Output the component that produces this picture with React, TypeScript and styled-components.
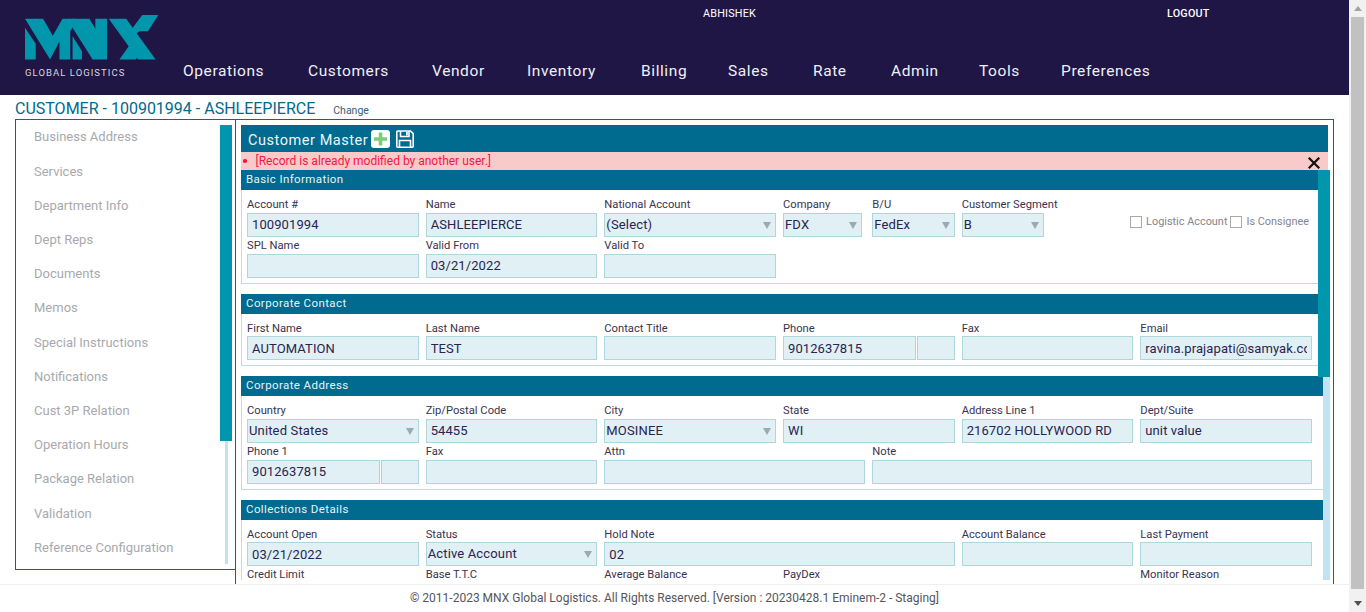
import React from "react";
import styled, { createGlobalStyle } from "styled-components";

const colors = {
  navy: "#1f1646",
  blue: "#006a8f",
  teal: "#0097ad",
  track: "#bfe3f1",
  inputBg: "#e0f0f4",
  inputBorder: "#aed7dd",
  rule: "#bfdcdf",
  text: "#2b2350",
  label: "#3a3350",
};

const GlobalStyle = createGlobalStyle`
  html, body { margin: 0; padding: 0; height: 100%; overflow: hidden; background: #fff; }
  * { box-sizing: border-box; }
  body { font-family: Roboto, "Liberation Sans", sans-serif; }
`;

const navItems = [
  { name: "Operations", width: 81 },
  { name: "Customers", width: 80 },
  { name: "Vendor", width: 51 },
  { name: "Inventory", width: 70 },
  { name: "Billing", width: 43 },
  { name: "Sales", width: 41 },
  { name: "Rate", width: 34 },
  { name: "Admin", width: 44 },
  { name: "Tools", width: 38 },
  { name: "Preferences", width: 90 },
];
const sideItems = [
  "Business Address",
  "Services",
  "Department Info",
  "Dept Reps",
  "Documents",
  "Memos",
  "Special Instructions",
  "Notifications",
  "Cust 3P Relation",
  "Operation Hours",
  "Package Relation",
  "Validation",
  "Reference Configuration",
];

const Logo = () => (
  <svg width="134" height="46" viewBox="30 22 400 137" fill={colors.teal}>
    <polygon points="30,60 62,108 62,155 30,155" />
    <polygon points="30,33 84,33 113,84 142,33 165,33 165,155 133,155 133,100 105,155" />
    <polygon points="160,33 180,33 172,60 165,70" />
    <polygon points="172,33 222,33 240,62 240,33 275,33 275,155 232,155 172,60" />
    <polygon points="172,85 200,130 200,155 172,155" />
    <polygon points="280,33 332,33 420,155 368,155" />
    <polygon points="350,62 380,22 428,22 397,70 372,70 362,78" />
    <polygon points="312,155 345,108 370,143 360,155" />
  </svg>
);

const AddIcon = () => (
  <svg width="19" height="18" viewBox="0 0 19 18">
    <rect width="19" height="18" rx="3" fill="#fff" />
    <path d="M7.700 2.500h3.600v4.700H16v3.600h-4.700v4.700H7.700v-4.700H3V7.200h4.700z" fill="#7ccc7c" />
  </svg>
);

const SaveIcon = () => (
  <svg width="18" height="18" viewBox="0 0 18 18" fill="none" stroke="#fff" strokeWidth="1.600">
    <path d="M1.800 1h12.700l2.700 2.700v12.500a1 1 0 0 1-1 1H1.800a1 1 0 0 1-1-1V2a1 1 0 0 1 1-1z" />
    <path d="M4.500 1v5.500h8.500V1" />
    <rect x="10" y="2" width="1.800" height="3.500" fill="#fff" stroke="none" />
    <path d="M3.500 17v-6.500h11V17" />
  </svg>
);

const CloseIcon = () => (
  <svg width="12" height="12" viewBox="0 0 12 12" stroke="#111" strokeWidth="2.2" strokeLinecap="square">
    <path d="M1.500 1.500l9 9M10.500 1.500l-9 9" />
  </svg>
);

const Shell = styled.div`
  display: flex;
  width: 1366px;
  height: 612px;
  overflow: hidden;
`;

const Page = styled.div`
  width: 1349px;
  display: flex;
  flex-direction: column;
`;

const Header = styled.header`
  height: 95px;
  background: ${colors.navy};
  position: relative;
  display: flex;
  padding-left: 25px;
`;

const Brand = styled.div`
  padding-top: 15px;
  width: 158px;
  flex-shrink: 0;
`;

const BrandText = styled.div`
  font-family: Roboto, sans-serif;
  font-size: 9.500px;
  color: #d6d6de;
  letter-spacing: 1.05px;
  line-height: 12px;
  margin-top: 2px;
  white-space: nowrap;
`;

const HeaderLink = styled.span<{ $left: number; $bold?: boolean }>`
  position: absolute;
  top: 7px;
  left: ${(p) => p.$left}px;
  font-size: 10.800px;
  line-height: 13px;
  color: #fff;
  font-weight: ${(p) => (p.$bold ? 500 : 400)};
  letter-spacing: 0.2px;
`;

const Nav = styled.nav`
  display: flex;
  gap: 44px;
  padding-top: 61px;
`;

const NavItem = styled.a<{ $width: number }>`
  width: ${(p) => p.$width}px;
  font-size: 15.500px;
  line-height: 20px;
  color: #eef0f5;
  letter-spacing: 0.6px;
  white-space: nowrap;
`;

const TitleRow = styled.div`
  height: 24px;
  padding: 3px 0 0 15px;
  display: flex;
  align-items: center;
  color: ${colors.blue};
`;

const Title = styled.h1`
  margin: 0;
  font-size: 16px;
  font-weight: 400;
  white-space: nowrap;
`;

const ChangeLink = styled.a`
  font-size: 10.500px;
  margin-left: 18px;
  margin-top: 3px;
  color: #2f5f78;
`;

const Workspace = styled.div`
  display: flex;
  padding-left: 15px;
  height: 465px;
`;

const Sidebar = styled.aside`
  width: 220px;
  height: 451px;
  border: 1px solid ${colors.blue};
  border-right: none;
  position: relative;
  padding: 0.300px 0 0 18px;
  overflow: hidden;
`;

const SideItem = styled.div`
  font-size: 13px;
  line-height: 34.200px;
  color: #a9a9ad;
  white-space: nowrap;
`;

const ScrollTrack = styled.div<{ $right: number; $top: number; $bottom: number }>`
  position: absolute;
  right: ${(p) => p.$right}px;
  top: ${(p) => p.$top}px;
  bottom: ${(p) => p.$bottom}px;
  width: 3px;
  background: ${colors.track};
`;

const PanelTrack = styled(ScrollTrack)`
  width: 7px;
`;

const ScrollThumb = styled.div<{ $right: number; $top: number; $height: number }>`
  position: absolute;
  right: ${(p) => p.$right}px;
  top: ${(p) => p.$top}px;
  height: ${(p) => p.$height}px;
  width: 12px;
  background: ${colors.teal};
`;

const ContentPane = styled.main`
  width: 1099px;
  border: 1px solid ${colors.blue};
  border-bottom: none;
  padding: 5px 3px 0 5px;
  display: flex;
  flex-direction: column;
`;

const MasterBar = styled.div`
  width: 1087px;
  height: 27px;
  background: ${colors.blue};
  display: flex;
  align-items: center;
  padding-left: 7px;
  color: #eef5f8;
`;

const MasterTitle = styled.span`
  font-size: 14.500px;
  letter-spacing: 0.55px;
  margin: 3px 3px 0 0;
`;

const MasterIcons = styled.span`
  display: flex;
  gap: 6px;
`;

const Alert = styled.div`
  width: 1087px;
  height: 18px;
  background: #f9caca;
  color: #f5173f;
  font-size: 12px;
  line-height: 18px;
  display: flex;
  align-items: center;
  padding: 0 8px 0 2px;
`;

const Bullet = styled.span`
  width: 3.500px;
  height: 3.500px;
  border-radius: 50%;
  background: #f5173f;
  margin-right: 9px;
`;

const AlertText = styled.span`
  flex: 1;
`;

const AlertClose = styled.span`
  display: flex;
  margin-top: 3px;
`;

const ScrollArea = styled.div`
  position: relative;
  width: 1089px;
  height: 410px;
  padding-right: 7px;
  overflow: hidden;
`;

const FormSection = styled.section`
  margin-bottom: 10px;
`;

const SectionHead = styled.div`
  height: 20px;
  background: ${colors.blue};
  color: #e8f3f7;
  font-size: 11.500px;
  letter-spacing: 0.4px;
  line-height: 19px;
  padding-left: 5px;
`;

const Label = styled.label`
  display: block;
  font-size: 11.200px;
  line-height: 15px;
  color: ${colors.label};
  white-space: nowrap;
  position: relative;
  top: -1px;
`;

const Input = styled.input`
  display: block;
  width: 100%;
  height: 24px;
  padding: 0 4px;
  border: 1px solid ${colors.inputBorder};
  border-radius: 0;
  outline: none;
  background: ${colors.inputBg};
  color: ${colors.text};
  font: 400 13px Roboto, sans-serif;
  letter-spacing: 0.1px;
`;

const SectionBody = styled.div<{ $top: number }>`
  border: 1px solid ${colors.rule};
  border-top: none;
  border-right: none;
  padding: ${(p) => p.$top}px 11px 5px 5px;
  display: grid;
  grid-template-columns: repeat(12, 1fr);
  column-gap: 7px;
  row-gap: ${(p) => (p.$top === 7 ? 1 : 2)}px;
  ${Label} {
    top: ${(p) => (p.$top === 7 ? 0 : -1)}px;
  }
  ${Input} {
    padding-bottom: ${(p) => (p.$top === 7 ? 0 : 1)}px;
  }
`;

const Cell = styled.div<{ $span?: number; $width?: number }>`
  grid-column: span ${(p) => p.$span ?? 2};
  width: ${(p) => (p.$width ? `${p.$width}px` : "auto")};
  min-width: 0;
`;

const SelectBox = styled.div`
  height: 24px;
  padding: 0 4px 2px 1px;
  border: 1px solid ${colors.inputBorder};
  background: ${colors.inputBg};
  color: ${colors.text};
  font-size: 13px;
  letter-spacing: 0.15px;
  display: flex;
  align-items: center;
  justify-content: space-between;
`;

const SelectArrow = styled.span`
  width: 0;
  height: 0;
  margin-top: 2px;
  border-left: 4px solid transparent;
  border-right: 4px solid transparent;
  border-top: 7px solid #9aa9b5;
`;

const SplitInputs = styled.div`
  display: grid;
  grid-template-columns: 1fr 38px;
  column-gap: 1px;
`;

const Checks = styled.div`
  grid-column: span 3;
  display: flex;
  justify-content: flex-end;
  align-items: center;
  height: 21px;
  margin-top: 13px;
  padding-right: 3px;
`;

const CheckBox = styled.span`
  width: 12px;
  height: 12px;
  border: 1px solid #aaa;
  margin: 0 4px 0 3px;
`;

const CheckLabel = styled.span`
  font-size: 10.900px;
  color: #85858c;
  white-space: nowrap;
`;

const Footer = styled.footer`
  height: 28px;
  border-top: 1px solid #eeeff2;
  text-align: center;
  font-size: 12px;
  line-height: 27px;
  color: #55555c;
`;

const PageScrollbar = styled.div`
  width: 17px;
  background: #f1f1f1;
  display: flex;
  flex-direction: column;
  align-items: center;
`;

const ArrowBtn = styled.span<{ $down?: boolean }>`
  width: 0;
  height: 0;
  margin: 6px 0;
  border-left: 4px solid transparent;
  border-right: 4px solid transparent;
  ${(p) => (p.$down ? "border-top: 5px solid #505050;" : "border-bottom: 5px solid #a3a3a3;")}
`;

const PageThumb = styled.div`
  width: 13px;
  flex: 1;
  margin: 0 0 6px;
  background: #c1c1c1;
`;

const Field = ({ label, value, span, width }: { label: string; value?: string; span?: number; width?: number }) => (
  <Cell $span={span} $width={width}>
    <Label>{label}</Label>
    <Input readOnly value={value ?? ""} />
  </Cell>
);

const SelectField = ({ label, value, span, width }: { label: string; value: string; span?: number; width?: number }) => (
  <Cell $span={span} $width={width}>
    <Label>{label}</Label>
    <SelectBox>
      {value}
      <SelectArrow />
    </SelectBox>
  </Cell>
);

const PhoneField = ({ label, value }: { label: string; value: string }) => (
  <Cell>
    <Label>{label}</Label>
    <SplitInputs>
      <Input readOnly value={value} />
      <Input readOnly value="" />
    </SplitInputs>
  </Cell>
);

export default function App() {
  return (
    <Shell>
      <GlobalStyle />
      <Page>
        <Header>
          <Brand>
            <Logo />
            <BrandText>GLOBAL LOGISTICS</BrandText>
          </Brand>
          <HeaderLink $left={703}>ABHISHEK</HeaderLink>
          <HeaderLink $left={1167} $bold>LOGOUT</HeaderLink>
          <Nav>
            {navItems.map((n) => (
              <NavItem key={n.name} $width={n.width}>{n.name}</NavItem>
            ))}
          </Nav>
        </Header>
        <TitleRow>
          <Title>CUSTOMER - 100901994 - ASHLEEPIERCE</Title>
          <ChangeLink>Change</ChangeLink>
        </TitleRow>
        <Workspace>
          <Sidebar>
            {sideItems.map((s) => (
              <SideItem key={s}>{s}</SideItem>
            ))}
            <ScrollTrack $right={7} $top={5} $bottom={5} />
            <ScrollThumb $right={3} $top={5} $height={316} />
          </Sidebar>
          <ContentPane>
            <MasterBar>
              <MasterTitle>Customer Master</MasterTitle>
              <MasterIcons>
                <AddIcon />
                <SaveIcon />
              </MasterIcons>
            </MasterBar>
            <Alert>
              <Bullet />
              <AlertText>[Record is already modified by another user.]</AlertText>
              <AlertClose>
                <CloseIcon />
              </AlertClose>
            </Alert>
            <ScrollArea>
              <FormSection>
                <SectionHead>Basic Information</SectionHead>
                <SectionBody $top={8}>
                  <Field label="Account #" value="100901994" />
                  <Field label="Name" value="ASHLEEPIERCE" />
                  <SelectField label="National Account" value="(Select)" />
                  <SelectField label="Company" value="FDX" span={1} width={79} />
                  <SelectField label="B/U" value="FedEx" span={1} />
                  <SelectField label="Customer Segment" value="B" span={1} />
                  <Checks>
                    <CheckBox />
                    <CheckLabel>Logistic Account</CheckLabel>
                    <CheckBox />
                    <CheckLabel>Is Consignee</CheckLabel>
                  </Checks>
                  <Field label="SPL Name" />
                  <Field label="Valid From" value="03/21/2022" />
                  <Field label="Valid To" />
                </SectionBody>
              </FormSection>
              <FormSection>
                <SectionHead>Corporate Contact</SectionHead>
                <SectionBody $top={7}>
                  <Field label="First Name" value="AUTOMATION" />
                  <Field label="Last Name" value="TEST" />
                  <Field label="Contact Title" />
                  <PhoneField label="Phone" value="9012637815" />
                  <Field label="Fax" />
                  <Field label="Email" value="ravina.prajapati@samyak.com" />
                </SectionBody>
              </FormSection>
              <FormSection>
                <SectionHead>Corporate Address</SectionHead>
                <SectionBody $top={8}>
                  <SelectField label="Country" value="United States" />
                  <Field label="Zip/Postal Code" value="54455" />
                  <SelectField label="City" value="MOSINEE" />
                  <Field label="State" value="WI" />
                  <Field label="Address Line 1" value="216702 HOLLYWOOD RD" />
                  <Field label="Dept/Suite" value="unit value" />
                  <PhoneField label="Phone 1" value="9012637815" />
                  <Field label="Fax" />
                  <Field label="Attn" span={3} />
                  <Field label="Note" span={5} />
                </SectionBody>
              </FormSection>
              <FormSection>
                <SectionHead>Collections Details</SectionHead>
                <SectionBody $top={7}>
                  <Field label="Account Open" value="03/21/2022" />
                  <SelectField label="Status" value="Active Account" />
                  <Field label="Hold Note" value="02" span={4} />
                  <Field label="Account Balance" />
                  <Field label="Last Payment" />
                  <Field label="Credit Limit" />
                  <Field label="Base T.T.C" />
                  <Field label="Average Balance" />
                  <Field label="PayDex" />
                  <Cell $span={2} />
                  <Field label="Monitor Reason" />
                </SectionBody>
              </FormSection>
              <PanelTrack $right={0} $top={0} $bottom={0} />
              <ScrollThumb $right={0} $top={0} $height={207} />
            </ScrollArea>
          </ContentPane>
        </Workspace>
        <Footer>© 2011-2023 MNX Global Logistics. All Rights Reserved. [Version : 20230428.1 Eminem-2 - Staging]</Footer>
      </Page>
      <PageScrollbar>
        <ArrowBtn />
        <PageThumb />
        <ArrowBtn $down />
      </PageScrollbar>
    </Shell>
  );
}
